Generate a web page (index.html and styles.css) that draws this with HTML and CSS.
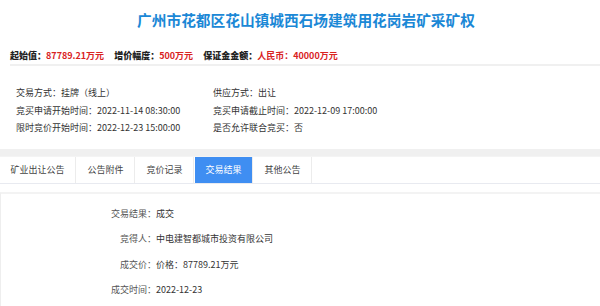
FILE: index.html
```html
<!DOCTYPE html>
<html>
<head>
	<meta charset="UTF-8">
	<title>交易结果</title>
	<link rel="stylesheet" href="styles.css">
</head>
<body>
	<div id="principal">
		<h1 id="titulo">广州市花都区花山镇城西石场建筑用花岗岩矿采矿权</h1>

		<div id="precos">
			<span class="preco"><b>起始值：</b><em>87789.21万元</em></span>
			<span class="preco"><b>增价幅度：</b><em>500万元</em></span>
			<span class="preco"><b>保证金金额：</b><em>人民币：40000万元</em></span>
		</div>

		<div id="info">
			<div>交易方式：挂牌（线上）</div>
			<div>供应方式：出让</div>
			<div>竞买申请开始时间：2022-11-14 08:30:00</div>
			<div>竞买申请截止时间：2022-12-09 17:00:00</div>
			<div>限时竞价开始时间：2022-12-23 15:00:00</div>
			<div>是否允许联合竞买：否</div>
		</div>

		<div id="abas">
			<ul id="abas-lista">
				<li>矿业出让公告</li>
				<li>公告附件</li>
				<li>竞价记录</li>
				<li class="ativo">交易结果</li>
				<li>其他公告</li>
			</ul>

			<div id="resultado">
				<div id="caixa">
					<div class="linha"><span class="rotulo">交易结果：</span><span>成交</span></div>
					<div class="linha"><span class="rotulo">竞得人：</span><span>中电建智都城市投资有限公司</span></div>
					<div class="linha"><span class="rotulo">成交价：</span><span>价格：87789.21万元</span></div>
					<div class="linha"><span class="rotulo">成交时间：</span><span>2022-12-23</span></div>
				</div>
			</div>
		</div>
	</div>
</body>
</html>
```

FILE: styles.css
```css
* {
	box-sizing: border-box;
}

body {
	margin: 0;
	background: #fff;
	font-family: "Noto Sans CJK SC", "Noto Sans", sans-serif;
	font-size: 9px;
	color: #333;
}

#titulo {
	margin: 0;
	padding: 8px 0 0 12px;
	height: 32px;
	line-height: 24px;
	text-align: center;
	font-size: 14.7px;
	font-weight: 700;
	color: #1b88d6;
}

#precos {
	margin: 17px 0 0 10px;
	padding-bottom: 2px;
	line-height: 13px;
	border-bottom: 2px solid #f0f0f0;
	font-weight: 700;
}

.preco {
	margin-right: 8px;
}

.preco b {
	color: #222;
}

.preco em {
	font-style: normal;
	color: #d9231f;
}

#info {
	display: grid;
	grid-template-columns: 197px 1fr;
	grid-auto-rows: 17.5px;
	align-items: center;
	padding: 18px 0 12px 16px;
}

#abas {
	background: #f0f0f0;
	padding-top: 7px;
}

#abas-lista {
	display: flex;
	list-style: none;
	margin: 0;
	padding: 0;
	height: 28px;
	background: #fff;
	border-top: 1px solid #f4f4f4;
	border-bottom: 1px solid #e8eaf0;
}

#abas-lista li {
	padding: 0 10.5px;
	line-height: 26px;
	margin-right: 1px;
	border-right: 1px solid #ececec;
	color: #444;
}

#abas-lista li.ativo {
	background: #3f8ef2;
	color: #fff;
}

#resultado {
	background: #fff;
	padding-top: 8px;
}

#caixa {
	border-top: 2px solid #f3f3f3;
	border-left: 1px solid #eee;
	padding: 7px 0 30px;
}

.linha {
	display: flex;
	line-height: 25.5px;
}

.linha .rotulo {
	width: 155px;
	text-align: right;
	color: #555;
}
```
